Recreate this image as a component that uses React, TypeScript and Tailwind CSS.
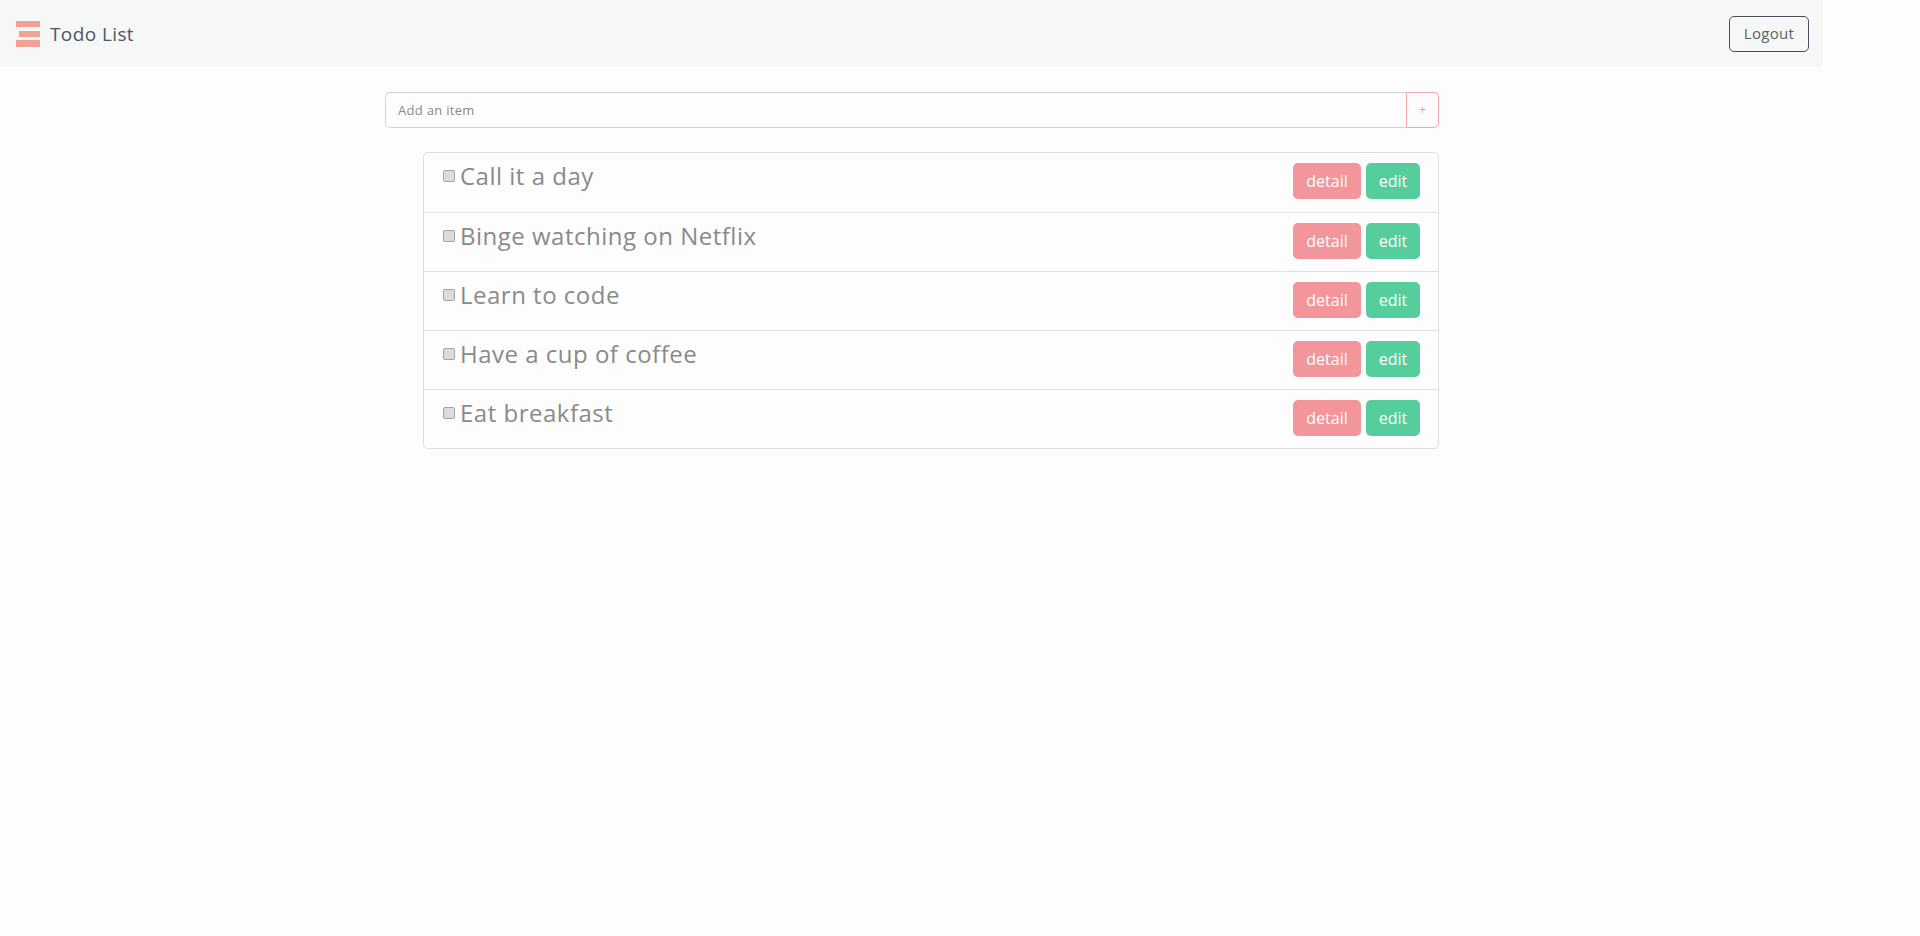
import { useState } from "react";

type Todo = { id: number; title: string; done: boolean };

const initialTodos: Todo[] = [
  { id: 1, title: "Call it a day", done: false },
  { id: 2, title: "Binge watching on Netflix", done: false },
  { id: 3, title: "Learn to code", done: false },
  { id: 4, title: "Have a cup of coffee", done: false },
  { id: 5, title: "Eat breakfast", done: false },
];

function Logo() {
  return (
    <svg width="25" height="27" viewBox="0 0 25 27" className="shrink-0">
      <rect x="0" y="0" width="24" height="6" fill="#f2a195" />
      <rect x="3" y="10" width="21" height="6" fill="#f2a195" />
      <rect x="0" y="19" width="24" height="7" fill="#f2a195" />
    </svg>
  );
}

export default function App() {
  const [todos, setTodos] = useState<Todo[]>(initialTodos);
  const [text, setText] = useState("");

  const addTodo = () => {
    if (!text.trim()) return;
    setTodos([{ id: Date.now(), title: text, done: false }, ...todos]);
    setText("");
  };

  return (
    <div className="min-h-[936px] w-full bg-[#fdfdfd] font-['Open_Sans',sans-serif]">
      {/* Header */}
      <header className="flex h-[67px] w-[1823px] items-center justify-between bg-[#f6f7f7] pl-4 pr-[14px]">
        <div className="flex items-center gap-[9px] pt-[1px]">
          <Logo />
          <span className="text-[19px] tracking-[0.4px] text-[#4f5663]">Todo List</span>
        </div>
        <button className="h-9 w-20 rounded-[5px] border border-[#4a4f57] text-[15px] tracking-[0.3px] text-[#5a5f68]">
          Logout
        </button>
      </header>

      {/* Add item */}
      <div className="mt-[25px] ml-[385px] flex h-9 w-[1054px]">
        <input
          value={text}
          onChange={(e) => setText(e.target.value)}
          placeholder="Add an item"
          className="h-full flex-1 rounded-l-[5px] border border-r-0 border-[#cfd4da] px-3 text-[13px] tracking-[0.3px] text-[#666] outline-none placeholder:text-[#8a8a8a]"
        />
        <button
          onClick={addTodo}
          className="h-full w-[33px] rounded-r-[5px] border border-[#f3a7ad] text-[13px] text-[#f0a0a0]"
        >
          +
        </button>
      </div>

      {/* List */}
      <ul className="mt-6 ml-[423px] w-[1016px] rounded-[5px] border border-[#dedede]">
        {todos.map((t, i) => (
          <li
            key={t.id}
            className={
              "flex h-[59px] items-start justify-between pl-[19px] pr-[18px] " +
              (i > 0 ? "border-t border-[#e0e0e0]" : "")
            }
          >
            <label className="mt-[7px] flex items-center gap-[5px]">
              <input
                type="checkbox"
                checked={t.done}
                onChange={() =>
                  setTodos(todos.map((x) => (x.id === t.id ? { ...x, done: !x.done } : x)))
                }
                className="h-[12px] w-[12px] appearance-none rounded-[2px] border border-[#a3a3a3] bg-[#dcdcdc] checked:bg-[#9a9a9a]"
              />
              <span className="text-[24px] leading-[32px] tracking-[0.5px] text-[#8a8a8a]">
                {t.title}
              </span>
            </label>
            <div className="mt-[10px] flex gap-[5px]">
              <button className="h-9 w-[68px] rounded-[5px] bg-[#f2969b] text-[16px] text-white">
                detail
              </button>
              <button className="h-9 w-[54px] rounded-[5px] bg-[#55cd9c] text-[16px] text-white">
                edit
              </button>
            </div>
          </li>
        ))}
      </ul>
    </div>
  );
}
